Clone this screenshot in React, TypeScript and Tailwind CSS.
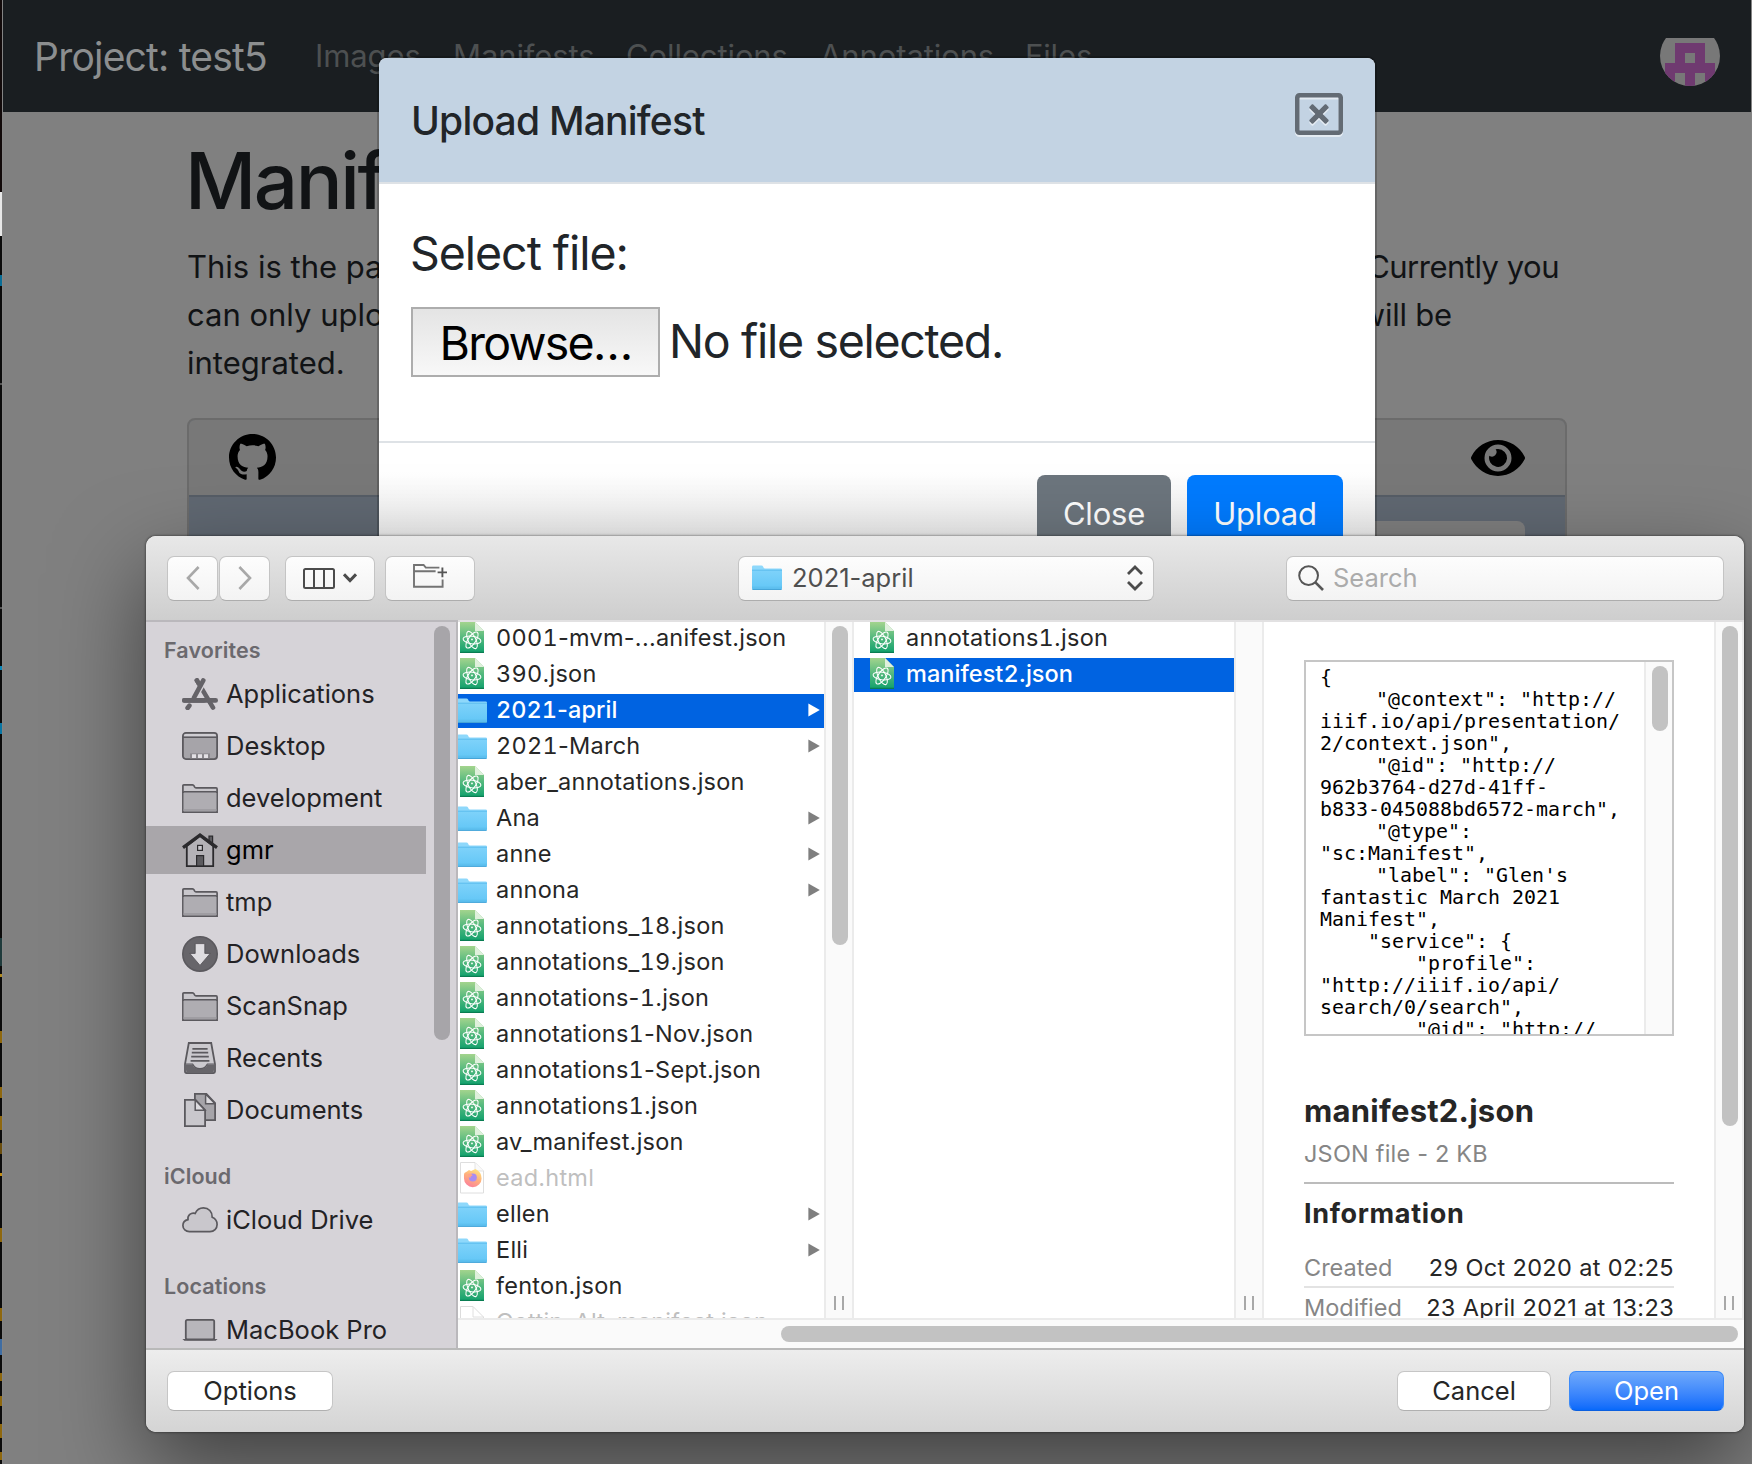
import React from "react";
import { FaEye, FaRegWindowClose } from "react-icons/fa";
import { BsGithub } from "react-icons/bs";

/* ---------- icons ---------- */

const G = "#5b595e";

function AppsIcon() {
  return (
    <svg width="36" height="32" viewBox="0 0 36 32" fill="none" stroke="#656368" strokeLinecap="round">
      <path d="M2.3 22.4H33.7" strokeWidth="4.6" />
      <path d="M14.9 2.4L31 29.6" strokeWidth="4.6" />
      <path d="M22.3 1.2L10.6 22" stroke="#d6d3d8" strokeWidth="7" strokeLinecap="butt" />
      <path d="M12 19.6L21.3 2.4M7.4 27.6L5.6 30" strokeWidth="4.6" />
      <path d="M2.3 22.4H22" strokeWidth="4.6" />
      <path d="M14.9 2.4L18 7.5" strokeWidth="4.6" />
    </svg>
  );
}

function DesktopIcon() {
  return (
    <svg width="36" height="28" viewBox="0 0 36 28">
      <rect x="0.9" y="0.9" width="34.2" height="26.2" rx="3" fill="#a6a4a9" stroke={G} strokeWidth="1.8" />
      <path d="M2 4.6V3.4Q2 2 4 2H32Q34 2 34 3.4V4.6Z" fill="#d0ced3" />
      <path d="M1 5.2H35" stroke={G} strokeWidth="1.6" />
      <rect x="8" y="21.4" width="20" height="5" fill="#8a888d" />
      <path d="M10 22.2h4v3.8h-4zM16 22.2h4v3.8h-4zM22 22.2h4v3.8h-4z" fill="#e2e0e4" />
    </svg>
  );
}

function GreyFolderIcon() {
  return (
    <svg width="36" height="29" viewBox="0 0 36 29">
      <path d="M0.9 28.1V1.9Q0.9 0.9 1.9 0.9H10.5Q11.6 0.9 12.1 2L12.7 3.2Q13.1 3.9 14 3.9H34.1Q35.1 3.9 35.1 4.9V28.1Z" fill="#c9c7cc" stroke={G} strokeWidth="1.7" />
      <path d="M1.7 8h32.6v19.3H1.7z" fill="#afadb2" />
      <path d="M1.7 25h32.6v2H1.7z" fill="#9f9da2" />
      <path d="M1 9Q1 7.7 2.3 7.7H33.7Q35 7.7 35 9" fill="none" stroke={G} strokeWidth="1.6" />
    </svg>
  );
}

function HomeIcon() {
  return (
    <svg width="36" height="34" viewBox="0 0 36 34">
      <path d="M27 11V3.2H30.6V13" fill="#5c5b5f" stroke="#2b2a2d" strokeWidth="1.2" />
      <path d="M4.8 13V33.1H31.2V13L18 3Z" fill="#b4b2b7" stroke="#2b2a2d" strokeWidth="1.8" />
      <path d="M1 14.6L18 2L35 14.6" fill="none" stroke="#2b2a2d" strokeWidth="3.2" />
      <rect x="15.6" y="12.4" width="4.8" height="5" fill="#c9c7cc" stroke="#2b2a2d" strokeWidth="1.2" />
      <rect x="14.6" y="22.6" width="7" height="10.4" fill="#5c5b5f" stroke="#2b2a2d" strokeWidth="1.2" />
    </svg>
  );
}

function DownloadsIcon() {
  return (
    <svg width="36" height="36" viewBox="0 0 36 36">
      <circle cx="18" cy="18" r="17.2" fill="#67656a" stroke={G} strokeWidth="1.6" />
      <path d="M13.2 7.6H22.8V17.4H28.2L18 29.4L7.8 17.4H13.2Z" fill="#dedce0" stroke="#4f4d52" strokeWidth="0.8" />
    </svg>
  );
}

function RecentsIcon() {
  return (
    <svg width="32" height="32" viewBox="0 0 32 32">
      <path d="M4.8 1H27.2L31 22V29.5Q31 31 29.5 31H2.5Q1 31 1 29.5V22Z" fill="#cbc9ce" stroke={G} strokeWidth="1.8" />
      <path d="M8.4 6.8H23.6M7.8 10.6H24.2M7.2 14.6H24.8M6.6 18.8H25.4" stroke={G} strokeWidth="1.7" />
      <path d="M1.4 22.4H8.4Q10.6 26.8 16 26.8T23.6 22.4H30.6L29.6 31H2.4Z" fill="#67656a" />
      <path d="M2 22H8.6Q10.8 26.6 16 26.6T23.4 22H30" fill="none" stroke={G} strokeWidth="1.2" />
    </svg>
  );
}

function DocumentsIcon() {
  return (
    <svg width="32" height="34" viewBox="0 0 32 34">
      <path d="M10.9 0.9H22.4L31.1 10V27.1H10.9Z" fill="#a6a4a9" stroke={G} strokeWidth="1.8" />
      <path d="M21.6 1V10.8H31Z" fill="#dcdade" stroke={G} strokeWidth="1.5" />
      <path d="M0.9 6.9H11.6L21.1 17V33.1H0.9Z" fill="#c9c7cc" stroke={G} strokeWidth="1.8" />
      <path d="M11.2 7V17.2H21Z" fill="#dcdade" stroke={G} strokeWidth="1.5" />
    </svg>
  );
}

function CloudIcon() {
  return (
    <svg width="36" height="26" viewBox="0 0 36 26">
      <path d="M7.4 24.6C3.8 24.6 0.9 22.2 0.9 18.6C0.9 15.6 3 13.2 6 12.6C5.2 8.4 9.2 5 13.2 6.4C14.6 3.2 17.6 0.9 21.4 0.9C26.6 0.9 30.4 4.8 30.2 10.2C33 11.4 35.1 14 35.1 17.4C35.1 21.6 32 24.6 28 24.6Z" fill="#c9c7cc" stroke={G} strokeWidth="1.7" />
    </svg>
  );
}

function LaptopIcon() {
  return (
    <svg width="36" height="22" viewBox="0 0 36 22">
      <rect x="3.8" y="0.9" width="28.4" height="19.4" rx="1.6" fill="#b8b6bb" stroke={G} strokeWidth="1.8" />
      <path d="M0.4 20H35.6L33.6 21.8H2.4Z" fill={G} />
    </svg>
  );
}

function JsonIcon() {
  return (
    <svg width="24" height="32" viewBox="0 0 24 32" className="shrink-0">
      <defs>
        <linearGradient id="json-bg" x1="0" y1="0" x2="0" y2="1">
          <stop offset="0" stopColor="#a3d48d" />
          <stop offset="0.5" stopColor="#55b97e" />
          <stop offset="1" stopColor="#10a06c" />
        </linearGradient>
      </defs>
      <path d="M0 0H15L24 9V31H0Z" fill="url(#json-bg)" />
      <path d="M0 30.4H24" stroke="#0a7d52" strokeWidth="1.2" />
      <path d="M15 0V9H24Z" fill="#dff0dc" />
      <g fill="none" stroke="#fff" strokeWidth="1.05">
        <ellipse cx="12" cy="18" rx="9" ry="3.8" transform="rotate(8 12 18)" />
        <ellipse cx="12" cy="18" rx="9.4" ry="3.8" transform="rotate(64 12 18)" />
        <ellipse cx="12" cy="18" rx="9.4" ry="3.8" transform="rotate(124 12 18)" />
      </g>
      <circle cx="12" cy="17.4" r="0.9" fill="#fff" />
    </svg>
  );
}

function BlueFolderIcon() {
  return (
    <svg width="30" height="27" viewBox="0 0 30 27" className="shrink-0">
      <defs>
        <linearGradient id="folder-bg" x1="0" y1="0" x2="0" y2="1">
          <stop offset="0" stopColor="#7ed2fa" />
          <stop offset="1" stopColor="#62c6f6" />
        </linearGradient>
      </defs>
      <path d="M0 2Q0 0.6 1.4 0.6H9.4Q10.6 0.6 11.2 1.8L11.8 3Q12 3.4 13 3.4H28.6Q30 3.4 30 4.8V8H0Z" fill="#8ed8fb" />
      <path d="M0 5.4H30V23.4Q30 24.4 29 24.4H1Q0 24.4 0 23.4Z" fill="url(#folder-bg)" />
      <path d="M0 5.2H30" stroke="#54b8ec" strokeWidth="0.9" />
      <path d="M0 22.2H30" stroke="#57b9ea" strokeWidth="0.7" />
      <path d="M0.4 24.3H29.6" stroke="#46a5d8" strokeWidth="1.2" />
    </svg>
  );
}

function HtmlIcon() {
  return (
    <svg width="24" height="32" viewBox="0 0 24 32" className="shrink-0">
      <defs>
        <linearGradient id="fox" x1="0.8" y1="0" x2="0.3" y2="1">
          <stop offset="0" stopColor="#ffe680" />
          <stop offset="0.5" stopColor="#ffb07c" />
          <stop offset="1" stopColor="#fb7f9c" />
        </linearGradient>
      </defs>
      <path d="M0.5 0.5H15L23.5 9V31H0.5Z" fill="#fff" stroke="#dedede" />
      <path d="M15 0.8V9H23.4" fill="#fafafa" stroke="#dedede" strokeWidth="0.8" />
      <path d="M4.4 11L7 9.4L9 8L11 9L15.5 7Q21.6 10 21.6 16.4A8.6 8.6 0 0 1 4 16.4Q3.6 13 4.4 11Z" fill="url(#fox)" />
      <circle cx="12.8" cy="15.4" r="4" fill="#a98cf2" />
      <path d="M7.4 12.2Q11 10.4 12.6 13.4Q10 14 10.4 16Q8 15 7.4 12.2Z" fill="#ffa487" />
    </svg>
  );
}

function BlankIcon() {
  return (
    <svg width="24" height="32" viewBox="0 0 24 32" className="shrink-0">
      <path d="M0.5 31V0.5H13L23.5 11V31Z" fill="#fff" stroke="#dcdcdc" />
      <path d="M13 0.8V11H23.4" fill="none" stroke="#dcdcdc" strokeWidth="0.9" />
    </svg>
  );
}

function Avatar() {
  return (
    <div className="mt-3 flex h-12 w-[60px] items-end overflow-hidden">
      <svg width="60" height="60" viewBox="0 0 60 60" className="shrink-0">
        <defs>
          <clipPath id="av"><circle cx="30" cy="30" r="30" /></clipPath>
        </defs>
        <g clipPath="url(#av)">
          <path d="M0 0h60v60H0z" fill="#787878" />
          <path fillRule="evenodd" d="M15 17H45V37H55V60H45V47H35V60H25V47H15V60H5V37H15ZM25 27V37H35V27Z" fill="#6f3a70" />
        </g>
      </svg>
    </div>
  );
}

/* ---------- page behind the modal ---------- */

const edgeTicks: [number, number, string][] = [
  [0, 192, "#120a0a"], [192, 44, "#e8e8e8"], [236, 39, "#0b0b0b"], [275, 11, "#0a6d96"], [286, 97, "#0b0b0b"],
  [383, 2, "#555555"], [385, 222, "#0b0b0b"], [607, 2, "#555555"], [609, 57, "#0b0b0b"], [666, 4, "#0b86b8"], [670, 53, "#0b0b0b"],
  [723, 11, "#0a76a4"], [734, 204, "#0b0b0b"], [938, 28, "#1f3b3c"], [966, 8, "#0b0b0b"], [974, 3, "#b08a20"],
  [977, 54, "#0b0b0b"], [1031, 12, "#8f680e"], [1043, 44, "#0b0b0b"], [1087, 11, "#8f680e"], [1098, 18, "#0b0b0b"],
  [1116, 14, "#8f680e"], [1130, 13, "#0b0b0b"], [1143, 11, "#6b4e0e"], [1154, 19, "#0b0b0b"], [1173, 3, "#c28d14"],
  [1176, 52, "#0b0b0b"], [1228, 14, "#8f680e"], [1242, 66, "#0b0b0b"], [1308, 13, "#8f680e"], [1321, 18, "#0b0b0b"],
  [1339, 16, "#3f6da3"], [1355, 18, "#0b0b0b"], [1373, 8, "#8f680e"], [1381, 15, "#0b0b0b"], [1396, 10, "#8f680e"],
  [1406, 18, "#0b0b0b"], [1424, 14, "#8f680e"], [1438, 14, "#0b0b0b"], [1452, 8, "#8f680e"], [1460, 4, "#0b0b0b"],
];

function Page() {
  return (
    <div className="flex h-full w-full">
      <div className="flex w-0.5 shrink-0 flex-col">
        {edgeTicks.map(([y, h, c]) => (
          <div key={y} className="w-full shrink-0" style={{ height: h, background: c }} />
        ))}
      </div>
      <div className="flex min-w-0 flex-1 flex-col border-x border-[#8a8a8a]/40 bg-[#808080]">
        <nav className="flex h-28 shrink-0 items-center bg-[#1a1e21] pr-[31px] pl-[31px] whitespace-nowrap">
          <span className="mt-0.5 w-[281px] text-[39px] tracking-[-0.78px] text-[#8c8e8f]">Project: test5</span>
          <div className="mt-px flex flex-1 text-[31px] tracking-[-0.1px] text-[#4d5051]">
            <span className="w-[138px]">Images</span>
            <span className="w-[173px]">Manifests</span>
            <span className="w-[194px]">Collections</span>
            <span className="w-[205px]">Annotations</span>
            <span>Files</span>
          </div>
          <Avatar />
        </nav>
        <main className="mr-[184px] ml-[184px] flex flex-col pt-[21px] text-[#111315]">
          <h1 className="-ml-0.5 h-24 text-[78px] leading-[96px] font-medium tracking-[-2.4px]">Manif</h1>
          <div className="mt-[14px] flex flex-col text-[31px] leading-[48px] whitespace-nowrap">
            <div className="flex justify-between pr-2">
              <span>This is the pa</span>
              <span className="tracking-[-0.5px]">Currently you</span>
            </div>
            <div className="flex justify-between pr-[115px]">
              <span>can only uplo</span>
              <span className="tracking-[-0.2px]">will be</span>
            </div>
            <span>integrated.</span>
          </div>
          <div className="mt-[31px] flex h-[700px] flex-col overflow-hidden rounded-lg border-2 border-[#6b6b6b] bg-[#606872]">
            <div className="flex h-[77px] shrink-0 items-center justify-between border-b-2 border-[#565d66] bg-[#787878] pr-10 pl-10 text-black">
              <BsGithub size={47} />
              <FaEye size={54} />
            </div>
            <div className="mt-6 mr-10 ml-[400px] h-20 rounded-lg bg-[#7f7f7f]" />
          </div>
        </main>
      </div>
    </div>
  );
}

function UploadModal() {
  return (
    <section className="absolute top-14 left-[377px] flex h-[531px] w-[1000px] flex-col overflow-hidden rounded-[10px] border-2 border-black/20 bg-white bg-clip-padding text-[#212529]">
      <header className="flex h-[126px] shrink-0 items-start justify-between border-b-2 border-[#dee2e6] bg-[#c3d3e3] pr-8 pl-8">
        <h5 className="mt-[33px] text-[39px] leading-[60px] font-medium tracking-[-0.78px]">Upload Manifest</h5>
        <FaRegWindowClose size={48} className="mt-8 text-[#636b74] drop-shadow-[0_2px_0_rgba(255,255,255,0.55)]" />
      </header>
      <div className="flex h-[259px] shrink-0 flex-col border-b-2 border-[#dee2e6] pl-8">
        <label className="mt-[33px] text-[46.5px] leading-[72px] tracking-[-1.05px]">
          <span className="-ml-px">Select file:</span>
        </label>
        <div className="mt-[18px] flex items-center text-[46.5px] tracking-[-1.3px]">
          <button className="h-[70px] w-[249px] border-2 border-[#adadad] bg-linear-to-b from-[#e4e4e4] to-[#f8f8f8] pb-1 text-black">
            <span className="tracking-[-1.75px]">Browse…</span>
          </button>
          <span className="ml-[9px]">No file selected.</span>
        </div>
      </div>
      <footer className="flex flex-1 justify-end gap-4 bg-linear-to-b from-white from-20% to-[#ececec] to-70% pt-8 pr-8 text-[31px] tracking-[-0.2px] text-white">
        <button className="h-[78px] w-[134px] rounded-lg bg-[#6c757d]">Close</button>
        <button className="h-[78px] w-[156px] rounded-lg bg-[#007bff]">Upload</button>
      </footer>
    </section>
  );
}

/* ---------- file picker ---------- */

const toolBtn =
  "flex h-[45px] items-center rounded-[7px] border border-[#c4c4c4] border-b-[#adadad] bg-linear-to-b from-[#fdfdfd] to-[#f3f3f3]";

function Toolbar() {
  return (
    <div className="flex h-[84px] shrink-0 items-center bg-linear-to-b from-[#e8e8e8] to-[#cecece] pl-[21px] text-[25.5px]">
      <button className={`${toolBtn} w-[51px] justify-center`}>
        <svg width="14" height="24" viewBox="0 0 14 24" fill="none" stroke="#a8a8a8" strokeWidth="2.6"><path d="M12.6 1L2 12L12.6 23" /></svg>
      </button>
      <button className={`${toolBtn} ml-px w-[51px] justify-center`}>
        <svg width="14" height="24" viewBox="0 0 14 24" fill="none" stroke="#a8a8a8" strokeWidth="2.6"><path d="M1.4 1L12 12L1.4 23" /></svg>
      </button>
      <button className={`${toolBtn} ml-[15px] w-[90px] justify-center gap-2`}>
        <svg width="32" height="21" viewBox="0 0 32 21" fill="none" stroke="#4b4b4b" strokeWidth="2"><rect x="1" y="1" width="30" height="19" rx="1.5" /><path d="M11 1V20M21 1V20" /></svg>
        <svg width="14" height="10" viewBox="0 0 14 10" fill="none" stroke="#4b4b4b" strokeWidth="3"><path d="M1 1.4L7 7.6L13 1.4" /></svg>
      </button>
      <button className={`${toolBtn} ml-[10px] w-[90px] justify-center`}>
        <svg width="34" height="24" viewBox="0 0 34 24" fill="none" stroke="#737373" strokeWidth="1.9" className="-mt-1">
          <path d="M26.4 3.6H12.8L10.6 1H1V22.8H29.6V15.6M1 7.2H22.6" />
          <path d="M29.4 3.6V13.2M24.6 8.4H34" stroke="#555" />
        </svg>
      </button>
      <button className={`${toolBtn} ml-[263px] w-[416px] justify-between px-[13px] text-[#4f4f4f]`}>
        <span className="flex items-center gap-2.5">
          <BlueFolderIcon />
          <span>2021-april</span>
        </span>
        <svg width="18" height="26" viewBox="0 0 18 26" fill="none" stroke="#4b4b4b" strokeWidth="2.8" className="-mr-1"><path d="M2 9L9 2L16 9M2 17L9 24L16 17" /></svg>
      </button>
      <div className={`${toolBtn} ml-[132px] w-[438px] gap-[9px] px-[11px] text-[#ababab]`}>
        <svg width="26" height="26" viewBox="0 0 26 26" fill="none" stroke="#565656" strokeWidth="2"><circle cx="10.6" cy="10.6" r="9.4" /><path d="M17.4 17.4L25 25" strokeWidth="2.6" /></svg>
        <span>Search</span>
      </div>
    </div>
  );
}

function SideHeading({ children }: { children: string }) {
  return <div className="flex h-9 shrink-0 items-center pl-[18px] text-[21.5px] font-semibold tracking-[0.1px] text-[#6b696e]">{children}</div>;
}

function SideItem({ icon, label, active }: { icon: React.ReactNode; label: string; active?: boolean }) {
  return (
    <div className="flex h-[52px] shrink-0 items-center">
      <div className={`flex h-12 w-[280px] items-center pl-9 ${active ? "bg-[#a9a6aa] text-black" : "text-[#232225]"}`}>
        <span className="flex w-9 justify-center">{icon}</span>
        <span className="ml-2 pt-px text-[25.5px] whitespace-nowrap">{label}</span>
      </div>
    </div>
  );
}

function Sidebar() {
  return (
    <aside className="flex w-[312px] shrink-0 overflow-hidden border-r-2 border-[#bab8bc] bg-[#d6d3d8]">
      <div className="flex w-[284px] shrink-0 flex-col pt-2.5">
        <SideHeading>Favorites</SideHeading>
        <SideItem icon={<AppsIcon />} label="Applications" />
        <SideItem icon={<DesktopIcon />} label="Desktop" />
        <SideItem icon={<GreyFolderIcon />} label="development" />
        <SideItem icon={<HomeIcon />} label="gmr" active />
        <SideItem icon={<GreyFolderIcon />} label="tmp" />
        <SideItem icon={<DownloadsIcon />} label="Downloads" />
        <SideItem icon={<GreyFolderIcon />} label="ScanSnap" />
        <SideItem icon={<RecentsIcon />} label="Recents" />
        <SideItem icon={<DocumentsIcon />} label="Documents" />
        <div className="h-[22px] shrink-0" />
        <SideHeading>iCloud</SideHeading>
        <SideItem icon={<CloudIcon />} label="iCloud Drive" />
        <div className="h-[22px] shrink-0" />
        <SideHeading>Locations</SideHeading>
        <SideItem icon={<LaptopIcon />} label="MacBook Pro" />
      </div>
      <div className="mt-1 ml-1 h-[414px] w-4 rounded-full bg-[#a7a5a9]" />
    </aside>
  );
}

type Kind = "json" | "folder" | "html" | "blank";
const files: [string, Kind][] = [
  ["0001-mvm-...anifest.json", "json"], ["390.json", "json"], ["2021-april", "folder"], ["2021-March", "folder"],
  ["aber_annotations.json", "json"], ["Ana", "folder"], ["anne", "folder"], ["annona", "folder"],
  ["annotations_18.json", "json"], ["annotations_19.json", "json"], ["annotations-1.json", "json"],
  ["annotations1-Nov.json", "json"], ["annotations1-Sept.json", "json"], ["annotations1.json", "json"],
  ["av_manifest.json", "json"], ["ead.html", "html"], ["ellen", "folder"], ["Elli", "folder"],
  ["fenton.json", "json"], ["Gottin_Alt_manifest.json", "blank"],
];

/* Digits are tabular, everything else keeps its proportional width. */
function FileName({ name }: { name: string }) {
  return (
    <>
      {name.split(/(\d+)/).map((part, i) => (i % 2 ? <span key={i} className="tabular-nums">{part}</span> : part))}
    </>
  );
}

function FileRow({ name, kind, selected, first }: { name: string; kind: Kind; selected?: boolean; first?: boolean }) {
  const dim = kind === "html" || kind === "blank";
  const tone = selected ? "bg-[#0063e1] text-white font-medium tracking-[0.05px]" : dim ? "text-[#bfbfbf] tracking-[0.25px]" : "text-[#262626] tracking-[0.25px]";
  return (
    <div className="h-9 shrink-0">
      <div className={`flex h-[34px] items-center ${tone}`}>
        <span className={`flex shrink-0 ${first ? "w-[38px]" : "w-[52px] pl-3.5"}`}>
          {kind === "folder" ? <span className="-ml-px flex"><BlueFolderIcon /></span> : <span className="-mt-0.5 ml-0.5 flex">
            {kind === "json" ? <JsonIcon /> : kind === "html" ? <HtmlIcon /> : <BlankIcon />}
          </span>}
        </span>
        <span className="flex-1 pb-0.5 text-[23.5px] whitespace-nowrap"><FileName name={name} /></span>
        {kind === "folder" && (
          <svg width="12" height="14" viewBox="0 0 12 14" className="mr-1 mb-0.5"><path d="M0.4 0.4L11.8 7L0.4 13.6Z" fill={selected ? "#fff" : "#7f7f7f"} /></svg>
        )}
      </div>
    </div>
  );
}

const track = "flex w-[30px] shrink-0 flex-col items-center justify-between border-x-2 border-[#ebebeb] bg-[#fafafa] pt-1 pb-2 pl-0.5";

function Grip() {
  return (
    <div className="mt-auto mr-0.5 flex h-3.5 w-2.5 justify-between">
      <div className="w-0.5 bg-[#a8a8a8]" />
      <div className="w-0.5 bg-[#a8a8a8]" />
    </div>
  );
}

const previewText = `{
\t"@context": "http://
iiif.io/api/presentation/
2/context.json",
\t"@id": "http://
962b3764-d27d-41ff-
b833-045088bd6572-march",
\t"@type": 
"sc:Manifest",
\t"label": "Glen's 
fantastic March 2021 
Manifest",
    "service": {
        "profile": 
"http://iiif.io/api/
search/0/search",
        "@id": "http://`;

function Preview() {
  return (
    <div className="flex w-[450px] shrink-0 flex-col overflow-hidden px-10 pt-[38px] whitespace-nowrap">
      <div className="flex h-[376px] shrink-0 overflow-hidden border-2 border-[#c6c6c6]">
        <pre className="w-[338px] shrink-0 pt-1 pl-[14px] font-['DejaVu_Sans_Mono',monospace] text-[19.95px] leading-[22px] text-black [tab-size:56px]">{previewText}</pre>
        <div className="flex w-7 justify-center border-l-2 border-[#ebebeb] bg-[#fafafa] pt-1 pl-0.5">
          <div className="h-[65px] w-4 rounded-full bg-[#c2c2c2]" />
        </div>
      </div>
      <div className="mt-[55px] h-10 shrink-0 text-[31px] leading-10 font-bold tracking-[0.25px] text-[#262626]">manifest2.json</div>
      <div className="mt-[9px] h-7 shrink-0 text-[23.5px] leading-7 tracking-[0.2px] text-[#868686]">JSON file - 2 KB</div>
      <div className="mt-[14px] h-0.5 shrink-0 bg-[#bcbcbc]" />
      <div className="mt-3 h-9 shrink-0 text-[27px] leading-9 font-bold tracking-[0.65px] text-[#262626]">Information</div>
      <div className="mt-[17px] flex h-[39px] shrink-0 items-center justify-between border-b-2 border-[#e3e3e3] text-[23.5px] text-[#262626]">
        <span className="text-[#868686]">Created</span>
        <span className="tracking-[0.35px]">29 Oct 2020 at 02:25</span>
      </div>
      <div className="flex h-[39px] shrink-0 items-center justify-between text-[23.5px] text-[#262626]">
        <span className="text-[#868686]">Modified</span>
        <span className="tracking-[0.35px]">23 April 2021 at 13:23</span>
      </div>
    </div>
  );
}

function FileDialog() {
  const pill = "flex h-10 items-center justify-center rounded-[7px] border text-[25.5px]";
  return (
    <section className="absolute top-[536px] left-[146px] flex h-[896px] w-[1598px] flex-col overflow-hidden rounded-[10px] bg-white shadow-[0_0_2px_1px_rgba(0,0,0,0.3),0_36px_90px_0_rgba(0,0,0,0.5)]">
      <Toolbar />
      <div className="flex h-0.5 shrink-0">
        <div className="w-[312px] bg-[#bab8bc]" />
        <div className="flex-1 bg-[#e2e1e2]" />
      </div>
      <div className="flex h-[726px] shrink-0">
        <Sidebar />
        <div className="flex min-w-0 flex-1 flex-col">
          <div className="flex h-[696px] shrink-0">
            <div className="flex w-[366px] shrink-0 flex-col overflow-hidden">
              {files.map(([n, k], i) => <FileRow key={n} name={n} kind={k} first selected={i === 2} />)}
            </div>
            <div className={track}>
              <div className="h-[319px] w-4 rounded-full bg-[#c2c2c2]" />
              <Grip />
            </div>
            <div className="flex w-[380px] shrink-0 flex-col">
              <FileRow name="annotations1.json" kind="json" />
              <FileRow name="manifest2.json" kind="json" selected />
            </div>
            <div className={track}><Grip /></div>
            <Preview />
            <div className={track}>
              <div className="h-[500px] w-4 rounded-full bg-[#c2c2c2]" />
              <Grip />
            </div>
          </div>
          <div className="flex h-[30px] items-center justify-end border-t-2 border-[#ebebeb] bg-[#fafafa] pr-1.5">
            <div className="h-4 w-[957px] rounded-full bg-[#c2c2c2]" />
          </div>
        </div>
      </div>
      <footer className="flex flex-1 items-center border-t-2 border-[#b9b9b9] bg-linear-to-b from-[#ededed] to-[#d4d4d4] pr-[20px] pl-[21px] text-[#262626]">
        <button className={`${pill} w-[166px] border-[#c6c6c6] border-b-[#b0b0b0] bg-white`}>Options</button>
        <button className={`${pill} mr-[18px] ml-auto w-[154px] border-[#c6c6c6] border-b-[#b0b0b0] bg-white`}>Cancel</button>
        <button className={`${pill} w-[155px] border-[#3d8bf8] border-b-[#0a5fe0] bg-linear-to-b from-[#6fa9fb] to-[#0669fb] text-white`}>Open</button>
      </footer>
    </section>
  );
}

export default function App() {
  return (
    <div className="relative h-[1464px] w-[1752px] overflow-hidden bg-[#808080] font-['Inter',sans-serif]">
      <Page />
      <UploadModal />
      <FileDialog />
    </div>
  );
}
